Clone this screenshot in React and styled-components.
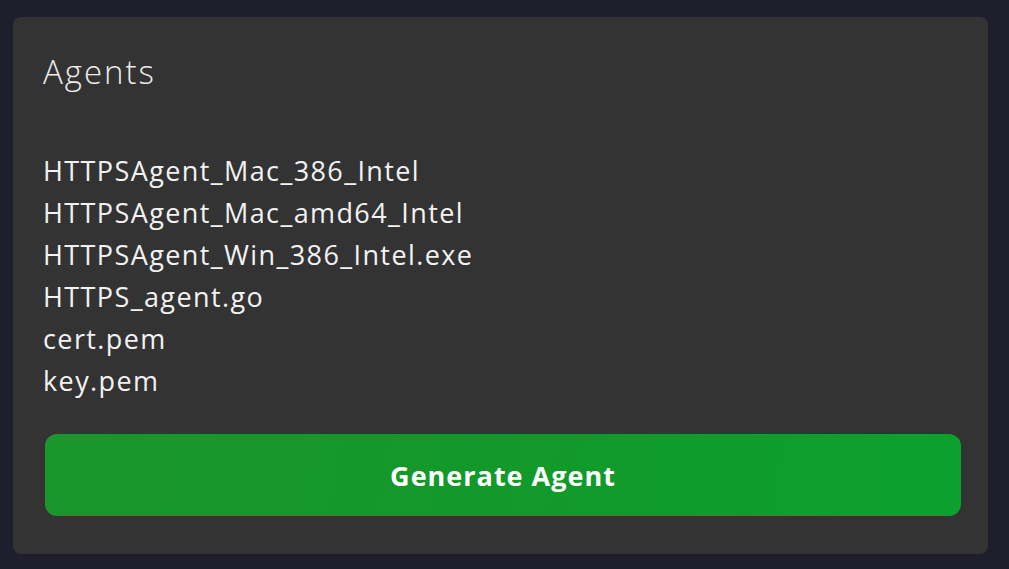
import styled, { createGlobalStyle } from 'styled-components';

const GlobalStyle = createGlobalStyle`
  html, body {
    margin: 0;
    padding: 0;
    background: #1e1e2d;
  }
  body {
    font-family: "Open Sans", "Liberation Sans", sans-serif;
  }
`;

const Page = styled.div`
  width: 1009px;
  height: 569px;
  box-sizing: border-box;
  padding: 17px 21px 15px 13px;
  background: #1e1e2d;
`;

const Card = styled.section`
  height: 100%;
  box-sizing: border-box;
  background: #333333;
  border-radius: 8px;
  padding: 32px 27px 38px 30px;
  display: flex;
  flex-direction: column;
`;

const Title = styled.h2`
  margin: 0;
  font-size: 33px;
  font-weight: 300;
  color: #ececec;
  line-height: 46px;
  letter-spacing: 2px;
`;

const FileList = styled.ul`
  list-style: none;
  margin: 55px 0 0;
  padding: 0;
`;

const FileItem = styled.li`
  font-size: 27px;
  font-weight: 400;
  color: #f2f2f2;
  line-height: 42px;
  letter-spacing: 1.4px;
`;

const GenerateButton = styled.button`
  margin-top: auto;
  margin-left: 2px;
  height: 82px;
  border: none;
  border-radius: 12px;
  background: linear-gradient(100deg, #1b962a 0%, #12992a 50%, #0ba12c 100%);
  color: #ffffff;
  font-family: inherit;
  font-size: 27px;
  font-weight: 700;
  letter-spacing: 1px;
  cursor: pointer;
`;

const files = [
  'HTTPSAgent_Mac_386_Intel',
  'HTTPSAgent_Mac_amd64_Intel',
  'HTTPSAgent_Win_386_Intel.exe',
  'HTTPS_agent.go',
  'cert.pem',
  'key.pem',
];

export default function App() {
  return (
    <>
      <GlobalStyle />
      <Page>
        <Card>
          <Title>Agents</Title>
          <FileList>
            {files.map((f) => (
              <FileItem key={f}>{f}</FileItem>
            ))}
          </FileList>
          <GenerateButton>Generate Agent</GenerateButton>
        </Card>
      </Page>
    </>
  );
}
